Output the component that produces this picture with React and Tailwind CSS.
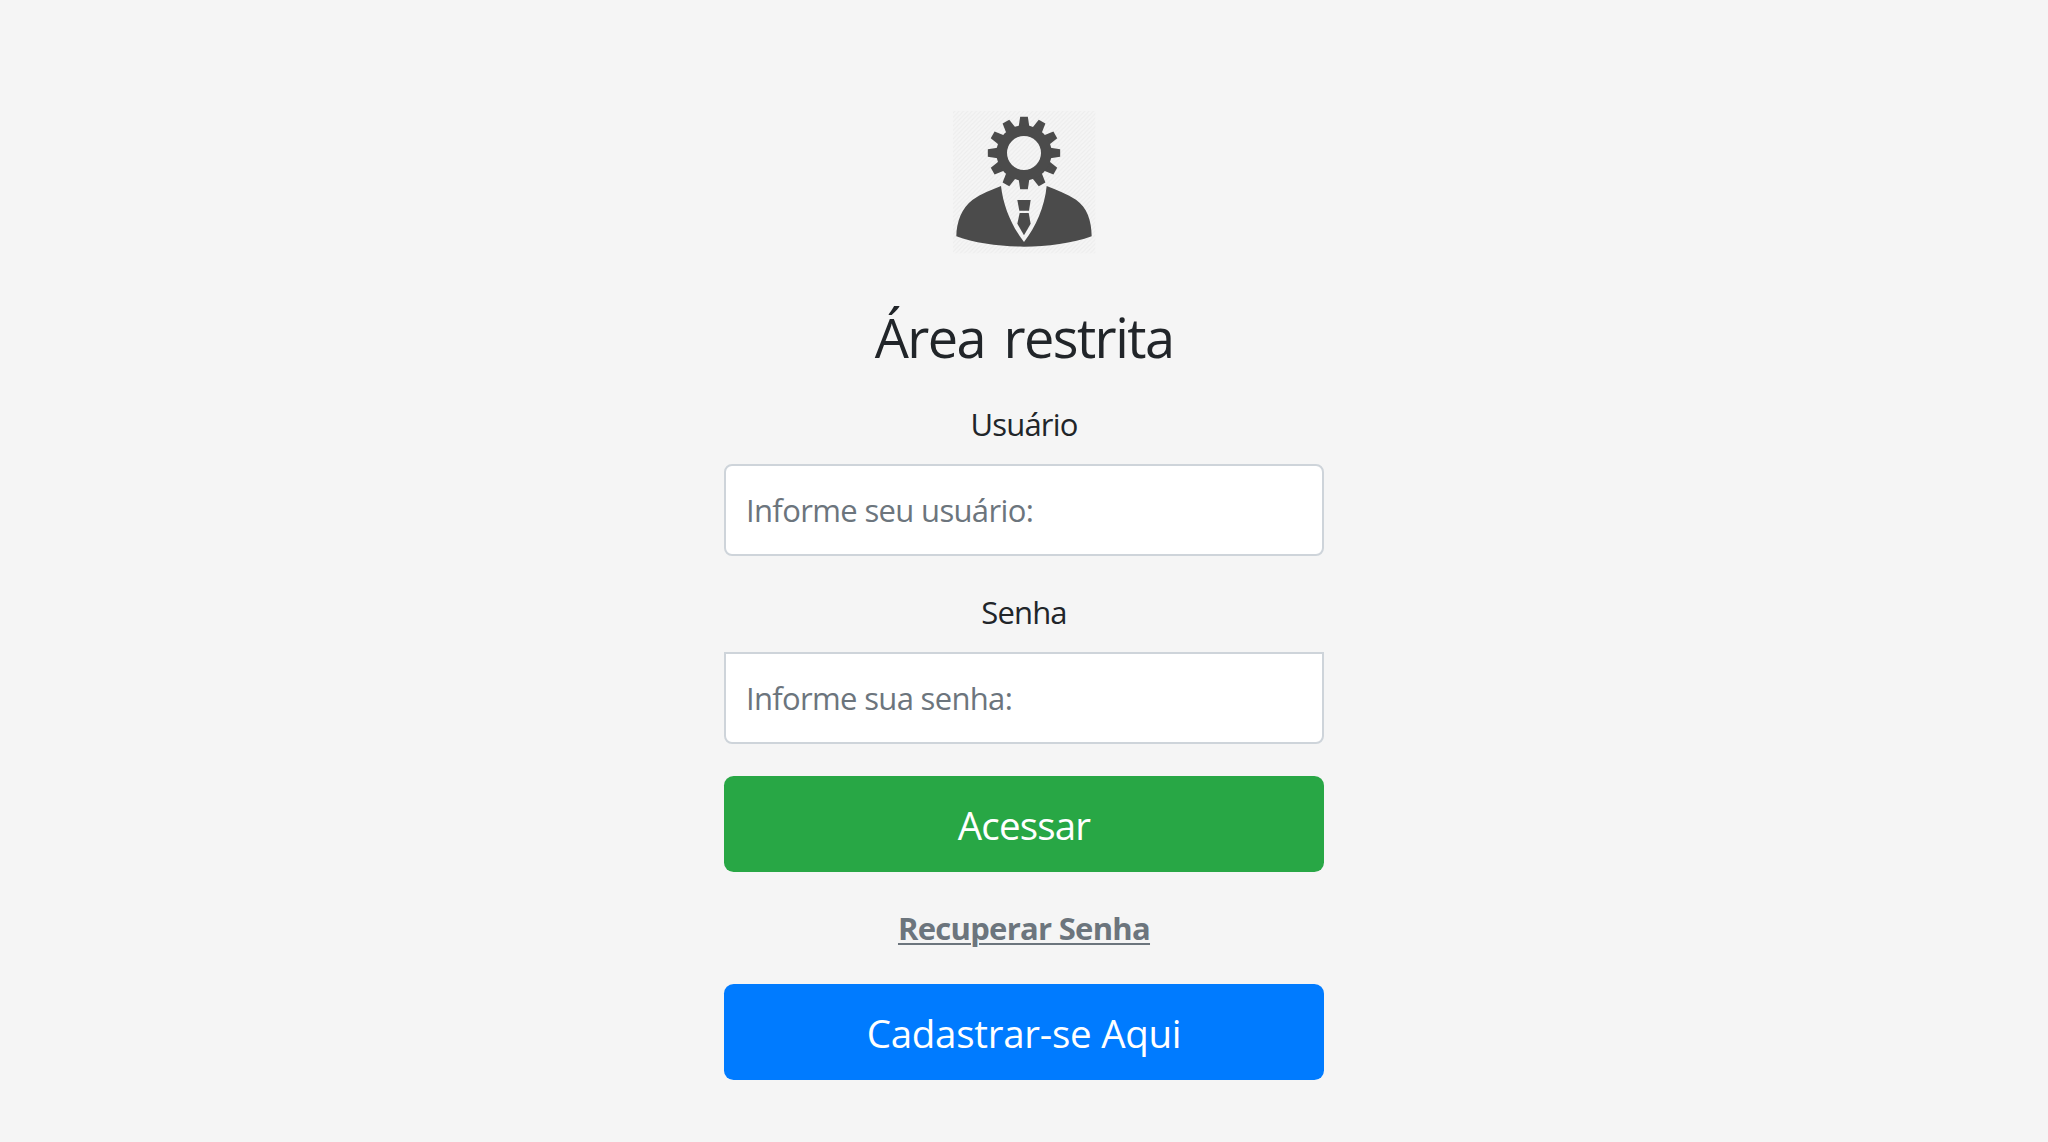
import React from "react";

const TEETH = [0, 30, 60, 90, 120, 150, 180, 210, 240, 270, 300, 330];

function AdminIcon() {
  return (
    <svg className="block size-36" viewBox="36 30 432 432" aria-hidden="true">
      <defs>
        <pattern id="hatch" width="13" height="13" patternUnits="userSpaceOnUse">
          <rect width="13" height="13" fill="#f5f5f5" />
          <path d="M-3 3L3 -3M0 13L13 0M10 16L16 10" stroke="#ececec" strokeWidth="3" />
        </pattern>
      </defs>
      <rect x="39" y="33" width="427" height="427" fill="url(#hatch)" />
      <g fill="#4b4b4b">
        {TEETH.map((angle) => (
          <path key={angle} d="M240.500 50.500H263.500L268 80H236Z" transform={`rotate(${angle} 252 159)`} />
        ))}
        <path
          fillRule="evenodd"
          d="M252 76a83 83 0 1 0 0 166a83 83 0 1 0 0-166ZM252 108a51 51 0 1 1 0 102a51 51 0 1 1 0-102Z"
        />
        <path d="M183 258C190 320 216 380 252 426C288 380 314 320 320 258C350 270 382 282 408 299C441 322 455 362 455 409C400 430 320 440 252 440C184 440 104 430 49 409C49 366 66 322 98 299C124 281 154 270 183 258Z" />
        <path d="M232 300H272L267 332H238Z" />
        <path d="M239 339H266L272 371L252 406L232 371Z" />
      </g>
    </svg>
  );
}

export default function App() {
  return (
    <main className="flex min-h-[1142px] flex-col items-center bg-[#f5f5f5] pt-[110px] font-['Open_Sans','Segoe_UI',sans-serif] text-[31px] leading-[48px] text-[#212529]">
      <form className="flex w-[600px] flex-col items-center">
        <AdminIcon />
        <h1 className="mt-[49px] mb-[29px] text-[54px] leading-[68px] tracking-[-1.55px] [word-spacing:6px]">Área restrita</h1>

        <label htmlFor="user" className="mb-4 tracking-[-0.8px]">Usuário</label>
        <input
          id="user"
          type="text"
          placeholder="Informe seu usuário:"
          className="mb-8 h-[92px] w-full rounded-lg border-2 border-[#ced4da] bg-white px-5 tracking-[-0.65px] placeholder:text-[#6c757d]"
        />

        <label htmlFor="password" className="mb-4 tracking-[-0.87px]">Senha</label>
        <input
          id="password"
          type="password"
          placeholder="Informe sua senha:"
          className="mb-8 h-[92px] w-full rounded-b-lg border-2 border-[#ced4da] bg-white px-5 tracking-[-0.67px] placeholder:text-[#6c757d]"
        />

        <button type="submit" className="h-24 w-full rounded-[9.6px] bg-[#28a745] pt-0.5 text-[38.5px] tracking-[-0.82px] text-white">
          Acessar
        </button>
        <a href="#" className="my-8 font-bold tracking-[-0.72px] text-[#6c757d] underline decoration-2 underline-offset-[3px]">
          Recuperar Senha
        </a>
        <button type="button" className="h-24 w-full rounded-[9.6px] bg-[#007bff] pt-0.5 text-[38.5px] tracking-[-0.26px] text-white">
          Cadastrar-se Aqui
        </button>
      </form>
    </main>
  );
}
